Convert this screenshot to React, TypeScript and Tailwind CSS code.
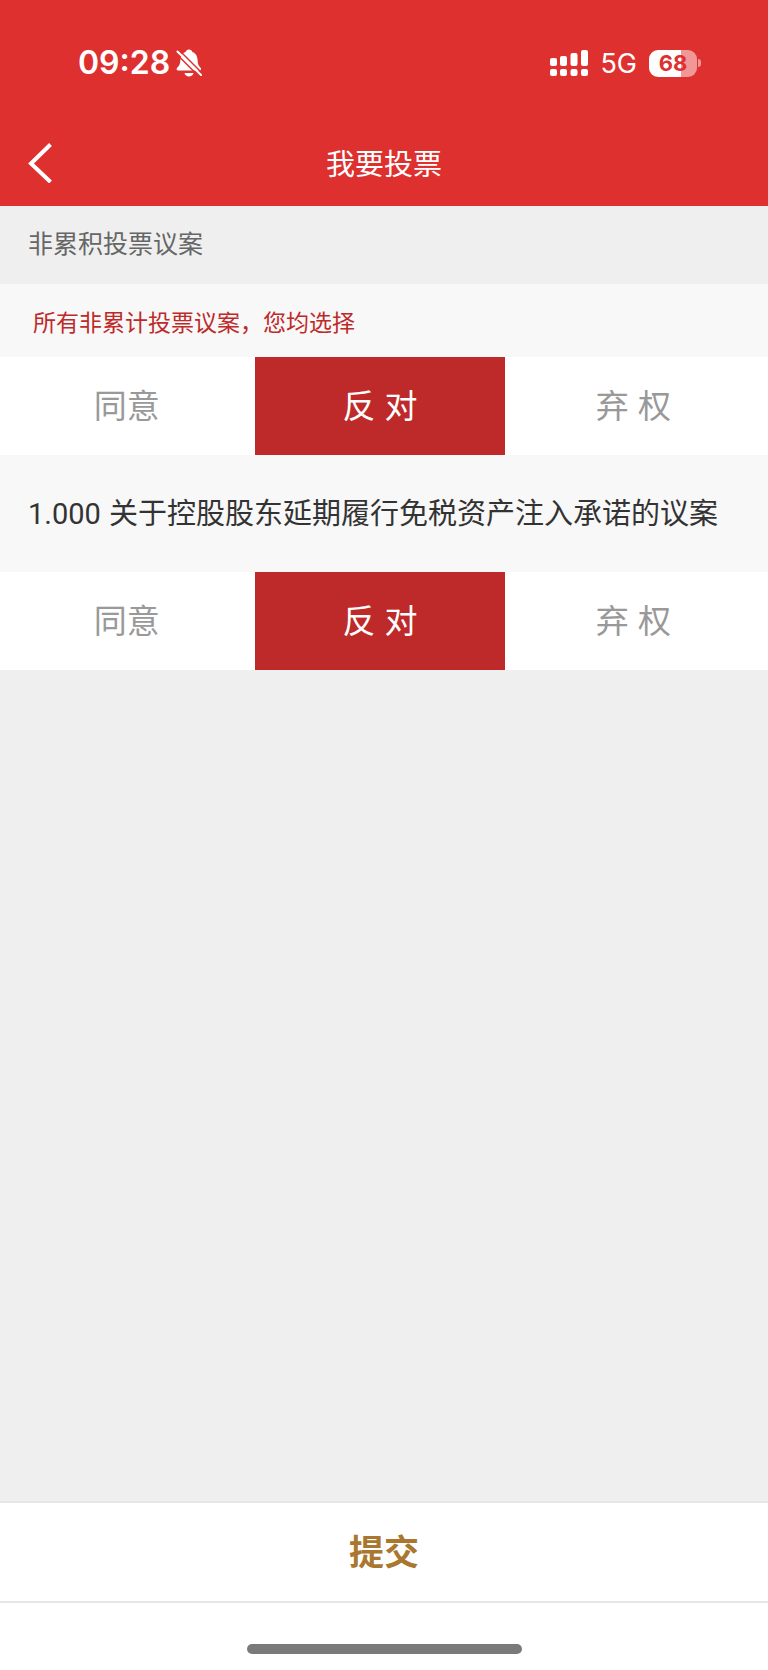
import React, { useState } from 'react';
import clsx from 'clsx';

type Choice = 'agree' | 'against' | 'abstain';

const choices: { value: Choice; label: string }[] = [
  { value: 'agree', label: '同意' },
  { value: 'against', label: '反 对' },
  { value: 'abstain', label: '弃 权' },
];

const proposals = [
  { id: '1.000', title: '关于控股股东延期履行免税资产注入承诺的议案' },
];

const BellOffIcon = () => (
  <svg className="w-[26px] h-7" viewBox="0 0 26 28" fill="none" aria-hidden="true">
    <path
      d="M13 .5c1.700 0 3 1 3.400 2.400 3.600 1.300 5 4.300 5.200 8.100.2 4.200 1 5.800 3 7.800.9.900.5 2.700-1 2.700H2.200C.5 21.500.2 19.700 1.200 18.700c2-2 3-3.600 3.200-7.700.2-3.800 1.600-6.800 5.200-8.100C10 1.500 11.300.5 13 .5Z"
      fill="white"
    />
    <path d="M8.500 24h9c-.4 2-2.200 3.500-4.500 3.500S8.900 26 8.500 24Z" fill="white" />
    <path d="M-1 3.500 24 28.500M3 1l24 24" stroke="#df3030" strokeWidth="1.500" />
    <path d="m1.500 2.500 23.500 23.500" stroke="white" strokeWidth="2" strokeLinecap="round" />
  </svg>
);

const SignalIcon = () => (
  <svg className="w-[38px] h-[27px]" viewBox="0 0 38 27" fill="white" aria-hidden="true">
    <rect x="0" y="8" width="7" height="8" rx="2" />
    <rect x="10" y="6" width="7" height="10" rx="2" />
    <rect x="20.500" y="3" width="7" height="13" rx="2" />
    <rect x="31" y="0" width="7" height="16" rx="2" />
    <rect x="0" y="19" width="7" height="7" rx="2" />
    <rect x="10" y="19" width="7" height="7" rx="2" />
    <rect x="20.500" y="19" width="7" height="7" rx="2" />
    <rect x="31" y="19" width="7" height="7" rx="2" />
  </svg>
);

const StatusBar = () => (
  <div className="flex h-[124px] items-center justify-between pt-0.5 pl-[78px] pr-[67px] text-white font-['Inter',sans-serif]">
    <div className="flex items-center gap-1.5">
      <span className="text-[32px] leading-10 font-semibold">09:28</span>
      <BellOffIcon />
    </div>
    <div className="flex items-center gap-3">
      <SignalIcon />
      <span className="pt-0.5 text-[27px] leading-8">5G</span>
      <div className="flex items-center gap-px">
        <div className="flex h-[27px] w-12 items-center justify-center rounded-[9px] bg-linear-to-r from-white from-67% to-[#f09898] to-67%">
          <span className="text-[22px] leading-6 font-bold text-[#df3030]">68</span>
        </div>
        <div className="h-2 w-[3px] rounded-r-full bg-[#f09898]" />
      </div>
    </div>
  </div>
);

interface VoteOptionsProps {
  name: string;
  label: string;
  value: Choice;
  onChange: (value: Choice) => void;
}

const VoteOptions: React.FC<VoteOptionsProps> = ({ name, label, value, onChange }) => (
  <div role="radiogroup" aria-label={label} className="grid grid-cols-3 bg-white pr-2">
    {choices.map((choice) => (
      <label
        key={choice.value}
        className={clsx(
          'relative mx-0.5 flex h-[98px] cursor-pointer items-center justify-center pt-0.5 text-[33px] leading-10',
          value === choice.value ? 'bg-[#be2a2a] text-white' : 'text-[#999]'
        )}
      >
        <input
          type="radio"
          className="sr-only"
          name={name}
          value={choice.value}
          checked={value === choice.value}
          onChange={() => onChange(choice.value)}
        />
        {choice.label}
      </label>
    ))}
  </div>
);

const App: React.FC = () => {
  const [allChoice, setAllChoice] = useState<Choice>('against');
  const [votes, setVotes] = useState<Record<string, Choice>>({ '1.000': 'against' });

  // The top row applies one choice to every proposal
  const handleAllChange = (value: Choice) => {
    setAllChoice(value);
    setVotes(Object.fromEntries(proposals.map((item) => [item.id, value])));
  };

  return (
    <div className="flex min-h-screen flex-col bg-[#efefef] font-['Liberation_Sans','Noto_Sans_CJK_SC',sans-serif]">
      {/* Header */}
      <header className="bg-[#df3030]">
        <StatusBar />
        <div className="grid h-[82px] grid-cols-[1fr_auto_1fr] items-center px-7">
          <button type="button" aria-label="返回" className="justify-self-start pb-1">
            <svg className="w-6 h-10" viewBox="0 0 24 40" fill="none" aria-hidden="true">
              <path d="M22.500 1.500 3 20.500l19.500 18.500" stroke="white" strokeWidth="4" />
            </svg>
          </button>
          <h1 className="text-[29px] leading-10 text-white">我要投票</h1>
        </div>
      </header>

      {/* Proposals */}
      <main className="flex-1">
        <h2 className="flex h-[78px] items-center px-7 pb-0.5 text-[25px] leading-8 text-[#666]">
          非累积投票议案
        </h2>
        <p className="flex h-[73px] items-center bg-[#f8f8f8] px-[33px] pt-1 text-[23px] leading-8 text-[#be2a2a]">
          所有非累计投票议案，您均选择
        </p>
        <VoteOptions name="all" label="所有议案" value={allChoice} onChange={handleAllChange} />

        {proposals.map((item) => (
          <section key={item.id}>
            <h3 className="bg-[#f8f8f8] px-7 pt-[39px] pb-[38px] text-[29px] leading-10 text-[#333]">
              <span className="font-['Roboto',sans-serif]">{item.id}</span> {item.title}
            </h3>
            <VoteOptions
              name={`vote-${item.id}`}
              label={item.title}
              value={votes[item.id]}
              onChange={(value) => setVotes({ ...votes, [item.id]: value })}
            />
          </section>
        ))}
      </main>

      {/* Submit */}
      <footer className="bg-white">
        <button
          type="button"
          className="h-[102px] w-full border-y-2 border-[#e6e6e6] pt-0.5 text-[35px] leading-10 font-bold text-[#a97730]"
        >
          提交
        </button>
        <div className="flex justify-center pt-[41px] pb-4">
          <div className="h-2.5 w-[275px] rounded-full bg-[#7a7a7a]" />
        </div>
      </footer>
    </div>
  );
};

export default App;
